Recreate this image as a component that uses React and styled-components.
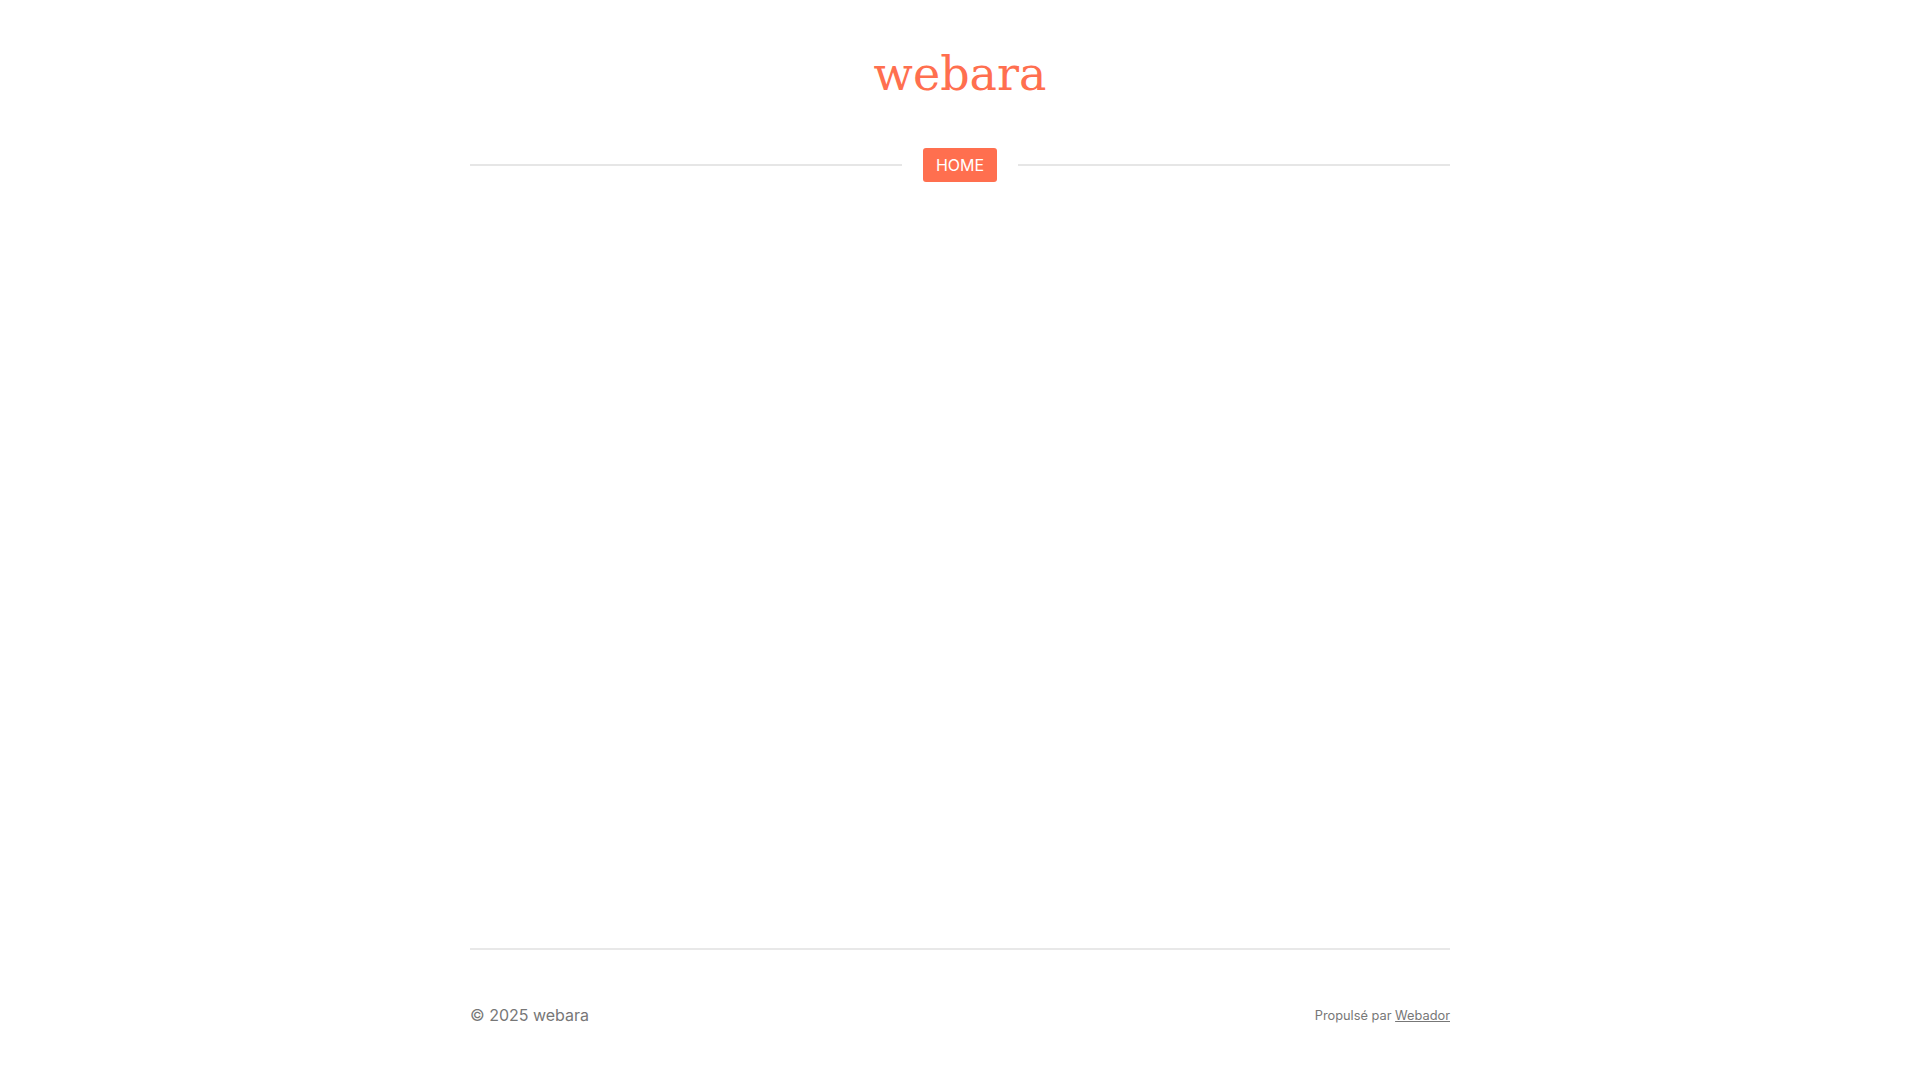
import React from "react";
import styled, { createGlobalStyle } from "styled-components";

const Global = createGlobalStyle`
  html, body { margin: 0; padding: 0; background: #ffffff; }
  body { font-family: Inter, "Noto Sans", sans-serif; color: #777777; }
  * { box-sizing: border-box; }
`;

const Page = styled.div`
  min-height: 100vh;
  display: flex;
  flex-direction: column;
  align-items: center;
`;

const Container = styled.div`
  width: 980px;
  flex: 1;
  display: flex;
  flex-direction: column;
`;

const Header = styled.header`
  padding-top: 41px;
  display: flex;
  flex-direction: column;
  align-items: center;
`;

const Title = styled.a`
  font-family: "DejaVu Serif", "Liberation Serif", serif;
  font-size: 46px;
  line-height: 66px;
  color: #ff6f4f;
  text-decoration: none;
`;

const Nav = styled.nav`
  margin-top: 41px;
  width: 100%;
  display: flex;
  align-items: center;
  gap: 21px;
`;

const Line = styled.div`
  flex: 1;
  height: 2px;
  background: #e6e6e6;
`;

const NavButton = styled.a`
  display: flex;
  align-items: center;
  justify-content: center;
  height: 34px;
  padding: 0 13px;
  background: #ff6f4f;
  color: #ffffff;
  border-radius: 3px;
  font-size: 16px;
  text-decoration: none;
  text-transform: uppercase;
`;

const Main = styled.main`
  flex: 1;
`;

const Footer = styled.footer`
  border-top: 2px solid #e8e8e8;
  height: 132px;
  padding-top: 53px;
  display: flex;
  justify-content: space-between;
  align-items: flex-start;
`;

const Copy = styled.span`
  font-size: 16px;
  line-height: 24px;
  color: #777777;
`;

const Powered = styled.span`
  font-size: 12.8px;
  line-height: 22px;
  padding-top: 2px;
  color: #777777;
  a { color: #777777; text-decoration: underline; }
`;

export default function App() {
  return (
    <>
      <Global />
      <Page>
        <Container>
          <Header>
            <Title href="#">webara</Title>
            <Nav>
              <Line />
              <NavButton href="#">Home</NavButton>
              <Line />
            </Nav>
          </Header>
          <Main />
          <Footer>
            <Copy>© 2025 webara</Copy>
            <Powered>
              Propulsé par <a href="#">Webador</a>
            </Powered>
          </Footer>
        </Container>
      </Page>
    </>
  );
}
